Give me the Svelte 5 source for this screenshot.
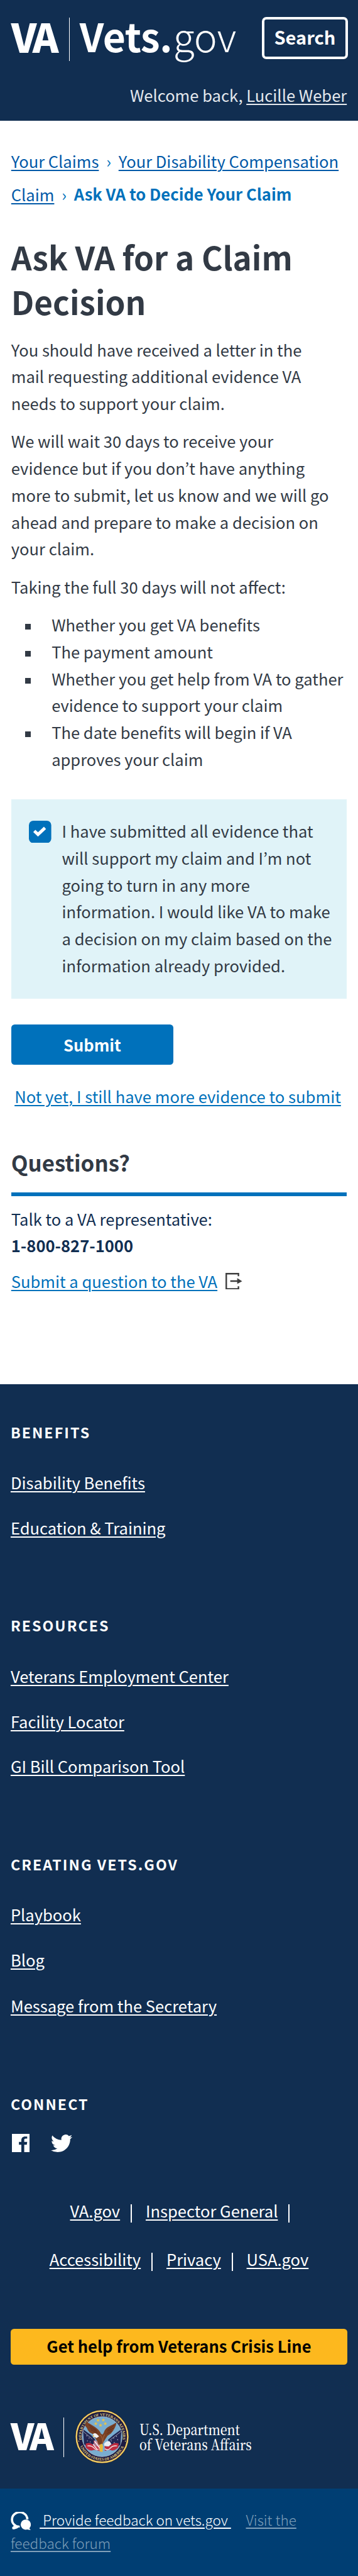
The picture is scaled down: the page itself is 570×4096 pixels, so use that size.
<script>
  const effects = [
    'Whether you get VA benefits',
    'The payment amount',
    'Whether you get help from VA to gather evidence to support your claim',
    'The date benefits will begin if VA approves your claim'
  ];

  const groups = [
    { title: 'Benefits', links: ['Disability Benefits', 'Education & Training'] },
    { title: 'Resources', links: ['Veterans Employment Center', 'Facility Locator', 'GI Bill Comparison Tool'] },
    { title: 'Creating Vets.gov', links: ['Playbook', 'Blog', 'Message from the Secretary'] }
  ];

  const legal = [
    ['VA.gov', 'Inspector General'],
    ['Accessibility', 'Privacy', 'USA.gov']
  ];

  const stars = [[45, 26], [54.5, 25.5], [41, 32], [58, 32], [49.5, 35]];
</script>

<div class="page">
  <header>
    <div class="brand">
      <span class="va">VA</span>
      <span class="rule"></span>
      <span class="site"><b>Vets.</b><span>gov</span></span>
      <button class="search">Search</button>
    </div>
    <p class="welcome">Welcome back, <a href="#account">Lucille Weber</a></p>
  </header>

  <main>
    <nav class="crumbs">
      <a href="#claims">Your Claims</a><i>›</i><a href="#claim">Your Disability Compensation Claim</a><i>›</i><strong>Ask VA to Decide Your Claim</strong>
    </nav>

    <h1>Ask VA for a Claim Decision</h1>
    <p class="intro">You should have received a letter in the mail requesting additional evidence VA needs to support your claim.</p>
    <p class="wait">We will wait 30 days to receive your evidence but if you don’t have anything more to submit, let us know and we will go ahead and prepare to make a decision on your claim.</p>
    <p>Taking the full 30 days will not affect:</p>
    <ul class="effects">
      {#each effects as effect}<li>{effect}</li>{/each}
    </ul>

    <div class="confirm">
      <svg class="check" viewBox="0 0 40 40"><rect width="40" height="40" rx="8" fill="#0071bb" /><path d="M9.7 18.2l6.6 6.2L28.8 12.8" fill="none" stroke="#fff" stroke-width="5.6" /></svg>
      <p>I have submitted all evidence that will support my claim and I’m not going to turn in any more information. I would like VA to make a decision on my claim based on the information already provided.</p>
    </div>

    <button class="submit">Submit</button>
    <p class="notyet"><a href="#status">Not yet, I still have more evidence to submit</a></p>

    <h2>Questions?</h2>
    <p class="contact">Talk to a VA representative:<br /><strong>1-800-827-1000</strong></p>
    <p class="ask">
      <a href="#ask">Submit a question to the VA</a>
      <svg viewBox="0 0 30 30"><path d="M23.2 6V1.4H1.4v27.2h21.8V24" fill="none" stroke="#3e3e3e" stroke-width="2.7" /><path d="M8.6 13.3H21V9.4l8.8 5.4-8.8 5V16H8.6z" fill="#3e3e3e" /></svg>
    </p>
  </main>

  <footer>
    {#each groups as group}
      <section>
        <h3>{group.title}</h3>
        {#each group.links as link}<p><a href="#footer">{link}</a></p>{/each}
      </section>
    {/each}

    <h3>Connect</h3>
    <div class="social">
      <svg class="fb" viewBox="0 0 32 32.5"><path fill="#fff" d="M0 0H32V32.5H22V19.5h4.6l.7-5.2H22v-3.3c0-1.5.5-2.5 2.6-2.5h2.7V4.9c-.5 0-2-.2-3.9-.2-3.9 0-6.6 2.4-6.6 6.8v2.8h-4.3v5.2h4.3V32.5H0z" /></svg>
      <svg class="tw" viewBox="0 2.2 24 19.4"><path fill="#fff" d="M23.953 4.57a10 10 0 01-2.825.775 4.958 4.958 0 002.163-2.723c-.951.555-2.005.959-3.127 1.184a4.92 4.92 0 00-8.384 4.482C7.69 8.095 4.067 6.13 1.64 3.162a4.822 4.822 0 00-.666 2.475c0 1.71.87 3.213 2.188 4.096a4.904 4.904 0 01-2.228-.616v.06a4.923 4.923 0 003.946 4.827 4.996 4.996 0 01-2.212.085 4.936 4.936 0 004.604 3.417 9.867 9.867 0 01-6.102 2.105c-.39 0-.779-.023-1.17-.067a13.995 13.995 0 007.557 2.209c9.053 0 13.998-7.496 13.998-13.985 0-.21 0-.42-.015-.63A9.935 9.935 0 0024 4.59z" /></svg>
    </div>

    <div class="legal">
      {#each legal as row, r}
        <div>
          {#each row as link, i}
            <a href="#legal">{link}</a>
            {#if r === 0 || i < row.length - 1}<span></span>{/if}
          {/each}
        </div>
      {/each}
    </div>

    <button class="crisis">Get help from Veterans Crisis Line</button>

    <div class="dept">
      <span class="va">VA</span>
      <span class="rule"></span>
      <svg class="seal" viewBox="0 0 105 110">
        <defs>
          <path id="ring-top" d="M16.2 63.5A37 37 0 1 1 88.4 63.5" />
          <path id="ring-bottom" d="M11.2 68A43 43 0 0 0 93.4 68" />
          <clipPath id="disc"><circle cx="52.3" cy="55.5" r="35.4" /></clipPath>
        </defs>
        <circle cx="52.3" cy="55.5" r="48" fill="#1b1535" />
        <circle cx="52.3" cy="55.5" r="46" fill="#1d1b42" stroke="#e0b545" stroke-width="2.8" />
        <circle cx="52.3" cy="55.5" r="46" fill="none" stroke="#fbe58b" stroke-width="1" />
        <circle cx="52.3" cy="55.5" r="35.7" fill="#79add0" stroke="#a9bfd0" stroke-width="1" />
        <g class="motto">
          <text><textPath href="#ring-top" textLength="127" startOffset="2.5">DEPARTMENT OF VETERANS AFFAIRS</textPath></text>
          <text><textPath href="#ring-bottom" textLength="98" startOffset="5">UNITED STATES OF AMERICA</textPath></text>
        </g>
        <circle cx="10.6" cy="63.5" r="1" fill="#d9c46a" /><circle cx="94" cy="63.5" r="1" fill="#d9c46a" />
        <g clip-path="url(#disc)">
          <path d="M18 42l15 11 7 8-3 8 4 8-12-1-9-7z" fill="#222653" />
          <path d="M87 42L72 53l-9 8 2 9-2 7 14-1 8-6z" fill="#222653" />
          <path d="M23 68q8-3 13 2t11 2v9q-8-3-12-1t-12-5zM82 68q-8-3-13 2t-12 2v9q8-3 12-1t12-5z" fill="#c02c40" />
          <path d="M26 72q8-1 12 4t10 1M79 72q-8-1-12 4t-10 1M38 63l8 6 3 8" fill="none" stroke="#f0e8e8" stroke-width="1.6" />
          <path d="M37 62l7 2 6 5v14l-8-4-5-9z" fill="#d5526099" />
          <path d="M39 64l9 12M36 69l8 10M43 63l7 10" stroke="#fff" stroke-width="1.5" />
          <g fill="#d9dbe8"><circle cx="25" cy="54" r=".8" /><circle cx="29" cy="58" r=".8" /><circle cx="26" cy="63" r=".8" /><circle cx="31" cy="65" r=".8" /><circle cx="73" cy="58" r=".8" /><circle cx="78" cy="55" r=".8" /><circle cx="80" cy="61" r=".8" /><circle cx="74" cy="66" r=".8" /><circle cx="69" cy="63" r=".8" /></g>
        </g>
        <path d="M17 45l18 15M88 45L66 62" stroke="#c9cdd4" stroke-width=".8" />
        <path d="M24 29q9 5 15 9 9 6 11 12l3 2 2-3q2-8 10-12 7-3 13-7l-1 5-2 5-3 5-4 5-6 4-4 6-3 5-3 6-6-1-3-7-3-5-4-7-6-3-3-4-2-4-3-4z" fill="#7a4125" />
        <path d="M28 34l14 10M30 39l13 7M32 43l12 6M74 35L62 44M73 40l-11 6M70 45l-9 5" stroke="#56291b" stroke-width="1" />
        <path d="M48 52q6 4 5 16M57 52q-4 6-3 14" fill="none" stroke="#a2623b" stroke-width="1.2" />
        <path d="M36 51q3-3 7 0l4 4-5 3-3-2-3 1 1-3z" fill="#f2f2f4" />
        <path d="M35.5 53l3 .5-2 3z" fill="#e8b530" />
        <path d="M56 68q5-6 10-4l3 5-5 4-8-1z" fill="#e9eef4" />
        <path d="M48 70l4-2 2 4-1 11-5-1z" fill="#e7ba3a" />
        {#each stars as [x, y]}
          <path transform="translate({x} {y})" d="M0-3l.9 2.1 2.3.2-1.7 1.5.5 2.2-2-1.2-2 1.2.5-2.2-1.7-1.5 2.3-.2z" fill="#e6c34a" />
        {/each}
      </svg>
      <p>U.S. Department<br />of Veterans Affairs</p>
    </div>

    <div class="feedback">
      <svg viewBox="0 0 36 33"><path d="M29.8 13.5A13.7 13 0 1 0 8 24.2Q7 27.5 3.5 29.3 9 29.3 12.8 26.2" fill="none" stroke="#fff" stroke-width="4" /><path d="M2 30.4q5-2.5 5-7.4l9.2 1.6v3.6q-3-.2-4.7-.6-4 3-9.5 2.8z" fill="#fff" /><circle cx="27" cy="22.8" r="9.1" fill="#fff" /><path d="M35.9 32.2q-5 .5-8.6-1.8l5.6-3.4q.4 3.4 3 5.2z" fill="#fff" /></svg>
      <p><a class="give" href="#feedback">&nbsp;Provide feedback on vets.gov&nbsp;</a> <a class="forum" href="#forum">Visit the feedback forum</a></p>
    </div>
  </footer>
</div>

<style>
  :global(body) { margin: 0; background: #fff; }
  .page {
    zoom: 0.8904;
    height: 4600px;
    overflow: hidden;
    box-sizing: border-box;
    font-family: 'Noto Sans CJK JP', 'Noto Sans', sans-serif;
    font-size: 28.7px;
    line-height: 48px;
    color: #323a45;
  }
  p, h1, h2, h3, ul { margin: 0; padding: 0; }
  a { color: inherit; text-decoration: underline; text-decoration-thickness: 2.3px; text-underline-offset: 3.3px; }
  button { display: block; border: 0; margin: 0; padding: 0; font: inherit; font-weight: 700; }
  svg { display: block; flex: none; }

  header { height: 216px; box-sizing: border-box; padding: 24px 20px 0; background: #112e51; color: #fff; }
  .brand { display: flex; height: 82px; line-height: 80px; }
  .va { font-weight: 900; font-size: 71px; letter-spacing: -6px; width: 103px; }
  .brand .rule { width: 1.5px; height: 78px; margin-top: 7px; background: #fff; }
  .site { font-size: 70px; margin-left: 18px; white-space: nowrap; }
  .site b { letter-spacing: -0.5px; }
  .site span { font-weight: 300; margin-left: 2px; }
  .search { margin: 6px -2px 0 auto; width: 154px; height: 76px; box-sizing: border-box; padding-bottom: 3px; border: 4.5px solid #fff; border-radius: 8px; background: none; color: #fff; font-size: 32.6px; line-height: 60px; }
  .welcome { margin-top: 40px; text-align: right; color: #e4e8ed; }

  main { height: 2256px; box-sizing: border-box; padding: 41.2px 20px 0; }
  .crumbs { line-height: 60px; color: #0071bb; }
  .crumbs a { color: #0059a8; }
  .crumbs i { font-style: normal; margin: 0 13.3px; }
  .crumbs strong { position: relative; top: -1.8px; }
  h1 { width: 560px; margin: 41.4px 0 22.3px; font-size: 57.5px; line-height: 79.8px; font-weight: 700; }
  .intro { width: 560px; margin-bottom: 19.8px; }
  .wait { width: 580px; margin-bottom: 20.2px; }
  .effects { list-style: none; margin: 19.5px 0 47.8px; }
  .effects li { display: flex; padding-left: 25px; }
  .effects li::before { content: ''; flex: none; width: 10px; height: 10px; margin: 22.5px 37.3px 0 0; background: #323a45; }

  .confirm { display: flex; height: 356px; box-sizing: border-box; padding: 32.5px 20px 0 32px; background: #e0f3f8; }
  .check { width: 40px; height: 40px; margin: 5px 18.7px 0 0; }
  .submit { margin-top: 46.2px; width: 290px; height: 71.5px; line-height: 70px; border-radius: 6px; background: #0071bb; color: #fff; }
  .notyet { margin: 33px 0 0 6px; color: #0071bb; white-space: nowrap; font-size: 28.8px; }
  h2 { margin-top: 67.8px; height: 79.5px; border-bottom: 6.8px solid #0071bb; margin-bottom: -0.8px; font-size: 39.1px; line-height: 52px; font-weight: 700; }
  .contact { margin-top: 17px; color: #112e51; }
  .ask { display: flex; gap: 15px; margin-top: 15.7px; color: #0071bb; }
  .ask svg { width: 30px; height: 30px; margin-top: 8.6px; }

  footer { height: 2128px; box-sizing: border-box; padding: 65.7px 19px 0; background: #112e51; color: #fff; }
  section { margin-bottom: 131.6px; }
  h3 { font-size: 26px; line-height: 40px; letter-spacing: 2.3px; font-weight: 700; text-transform: uppercase; margin-bottom: 46px; }
  section p + p { margin-top: 32.3px; }
  section:nth-of-type(3) p:last-child { margin-top: 34.3px; }
  .social { display: flex; gap: 37.5px; margin-top: -13.5px; height: 34px; }
  .fb { width: 32px; height: 32.5px; margin-left: 2px; }
  .tw { width: 38.5px; height: 31.5px; margin-top: 2px; }
  .legal { margin-top: 61.1px; line-height: 86.4px; }
  .legal div { display: flex; justify-content: center; }
  .legal span { width: 2.25px; height: 32px; background: #fff; margin: 31.4px 24.8px 0 18.8px; }
  .legal div:first-child { padding-left: 3px; }
  .legal div:first-child span:last-child { margin-right: 0; }
  .crisis { width: 602px; height: 64px; box-sizing: border-box; margin-top: 80.3px; padding-bottom: 4px; border-radius: 6px; background: #fdb81e; color: #000; line-height: 55.5px; }

  .dept { display: flex; height: 110px; margin-top: 73.3px; }
  .dept .va { font-size: 65.5px; letter-spacing: -6.5px; width: 94px; line-height: 80px; margin-top: 11px; }
  .dept .rule { width: 1.5px; height: 71px; margin-top: 21px; background: #fff; }
  .seal { width: 105px; height: 110px; margin-left: 15.5px; }
  .motto { font: bold 6.9px 'Liberation Serif', serif; fill: #e3cf7c; }
  .dept p { margin: 27.6px 0 0 14px; font: 500 26.5px/27.5px 'Noto Serif CJK JP', 'Liberation Serif', serif; transform: scaleX(0.832); transform-origin: 0 0; white-space: nowrap; }

  .feedback { display: flex; height: 156px; box-sizing: border-box; margin: 38px -19px 0; padding: 35px 19px 0; background: #003e73; font-size: 25.3px; font-weight: 300; line-height: 42px; }
  .feedback svg { width: 36px; height: 33px; margin-top: 7px; margin-right: -36px; }
  .feedback p { width: 540px; text-indent: 52px; }
  .forum { color: #7f9fb9; margin-left: 21px; }
</style>
